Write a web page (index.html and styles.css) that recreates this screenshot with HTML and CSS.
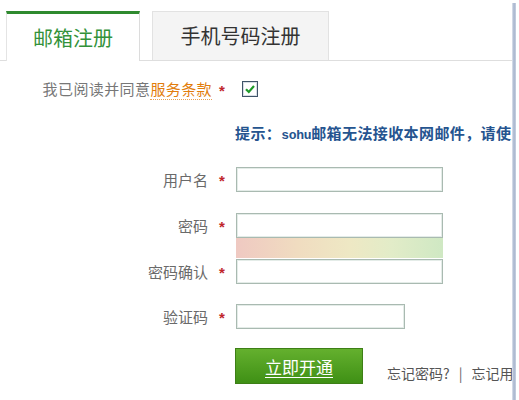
FILE: index.html
```html
<!DOCTYPE html>
<html lang="zh-CN">
<head>
<meta charset="utf-8">
<title>注册</title>
<link rel="stylesheet" href="styles.css">
</head>
<body>
<div class="frame">
  <div class="page">
    <div class="tabs">
      <div class="tab active">邮箱注册</div>
      <div class="tab">手机号码注册</div>
    </div>
    <div class="form">
      <div class="row agree">
        <div class="label wide">我已阅读并同意<a class="terms" href="#">服务条款</a></div>
        <div class="star">*</div>
        <div class="check">
          <svg width="16" height="16" viewBox="0 0 16 16">
            <rect x="0.5" y="0.5" width="15" height="15" fill="#fff" stroke="#3f5468"/>
            <rect x="1.5" y="1.5" width="13" height="13" fill="none" stroke="#d8dee6"/>
            <path d="M4 8.2 L6.8 11 L12 5" fill="none" stroke="#1f9a2a" stroke-width="2.2"/>
          </svg>
        </div>
      </div>
      <div class="tip">提示：<span class="mono">sohu</span>邮箱无法接收本网邮件，请使用其他邮箱</div>
      <div class="row field user">
        <div class="label">用户名</div>
        <div class="star">*</div>
        <input class="input" type="text">
      </div>
      <div class="row field pwd">
        <div class="label">密码</div>
        <div class="star">*</div>
        <div class="stack">
          <input class="input" type="password">
          <div class="strength"></div>
        </div>
      </div>
      <div class="row field confirm">
        <div class="label">密码确认</div>
        <div class="star">*</div>
        <input class="input" type="password">
      </div>
      <div class="row field code">
        <div class="label">验证码</div>
        <div class="star">*</div>
        <input class="input short" type="text">
      </div>
      <div class="actions">
        <button class="submit" type="button">立即开通</button>
        <div class="links"><a href="#">忘记密码?</a><span class="sep">|</span><a href="#">忘记用户名?</a></div>
      </div>
    </div>
  </div>
  <div class="rail"></div>
</div>
</body>
</html>
```

FILE: styles.css
```css
* { box-sizing: border-box; }
html, body { margin: 0; padding: 0; background: #fff; }
body {
  font-family: "Noto Sans CJK SC", "Noto Sans", sans-serif;
  color: #666;
}
.frame {
  display: flex;
  height: 400px;
  overflow: hidden;
}
.page {
  width: 512px;
  flex: none;
  overflow: hidden;
}
.rail {
  width: 4px;
  flex: none;
  margin-top: 3px;
  background: linear-gradient(to right, #dfe5ef, #a5b3cc 50%, #c9d2e2);
}
.tabs {
  display: flex;
  align-items: flex-end;
  height: 61px;
  padding-left: 6px;
  border-bottom: 1px solid #dedede;
}
.tab {
  height: 49px;
  display: flex;
  align-items: center;
  justify-content: center;
  font-size: 20px;
  line-height: 1;
  color: #333;
}
.tab.active {
  width: 134px;
  height: 50px;
  margin-bottom: -1px;
  background: #fff;
  color: #33923a;
  border-top: 3px solid #2f8a2f;
  border-left: 1px solid #e4e4e4;
  border-right: 1px solid #dcdcdc;
  padding-top: 1px;
}
.tab:not(.active) {
  width: 177px;
  margin-left: 12px;
  background: #f4f4f4;
  border: 1px solid #e2e2e2;
  border-bottom: none;
}
.form { padding-top: 16px; }
.row {
  display: flex;
  align-items: center;
}
.label {
  width: 212px;
  flex: none;
  text-align: right;
  font-size: 15px;
  line-height: 24px;
  padding-right: 4px;
  color: #6a6a6a;
  white-space: nowrap;
}
.label.wide { padding-right: 0; color: #777; letter-spacing: 0.4px; }
.terms {
  color: #e27d0c;
  text-decoration: none;
  border-bottom: 1px dotted #e8a050;
}
.star {
  width: 20px;
  height: 24px;
  flex: none;
  text-align: center;
  color: #c0262c;
  font-size: 15px;
  font-weight: bold;
  font-family: "Liberation Sans", sans-serif;
  line-height: 21px;
  padding-top: 3px;
}
.agree { height: 24px; }
.check { margin-left: 10px; display: flex; }
.tip {
  margin-top: 22px;
  padding-left: 235px;
  height: 20px;
  line-height: 20px;
  font-size: 15px;
  font-weight: bold;
  color: #25548f;
  white-space: nowrap;
  letter-spacing: 0.4px;
}
.mono {
  font-family: "Liberation Mono", monospace;
  font-size: 13px;
  letter-spacing: -0.3px;
}
.field { align-items: flex-start; height: 25px; }
.field .label { line-height: 25px; height: 25px; }
.field .star { height: 25px; line-height: 22px; }
.input {
  width: 207px;
  height: 25px;
  margin: 0 0 0 4px;
  padding: 0 4px;
  border: 1px solid #a9bab1;
  box-shadow: inset 0 0 0 1px #e4ece8;
  background: #fff;
  font: inherit;
  outline: none;
}
.input.short { width: 169px; }
.pwd { height: auto; }
.stack { display: flex; flex-direction: column; margin-left: 4px; }
.stack .input { margin-left: 0; }
.strength {
  width: 207px;
  height: 20px;
  background: linear-gradient(to right, #efc9c2 0%, #f0dcc0 30%, #eee8c4 55%, #e2ecc8 75%, #cfe8c3 100%);
}
.user { margin-top: 24px; }
.pwd { margin-top: 21px; }
.confirm { margin-top: 1px; }
.code { margin-top: 20px; }
.actions {
  display: flex;
  align-items: flex-end;
  margin-top: 19px;
  padding-left: 235px;
}
.submit {
  width: 128px;
  height: 36px;
  flex: none;
  border: 1px solid #3d7f16;
  background: linear-gradient(#64b02e, #3f9015);
  color: #fff;
  font-family: "Noto Sans CJK SC", sans-serif;
  font-size: 17px;
  text-decoration: underline;
  text-underline-offset: 3px;
  padding: 0;
}
.links {
  margin-left: 24px;
  padding-bottom: 0;
  font-size: 14px;
  line-height: 22px;
  white-space: nowrap;
}
.links a { color: #555; text-decoration: none; }
.sep { margin: 0 9px; color: #666; }
```
